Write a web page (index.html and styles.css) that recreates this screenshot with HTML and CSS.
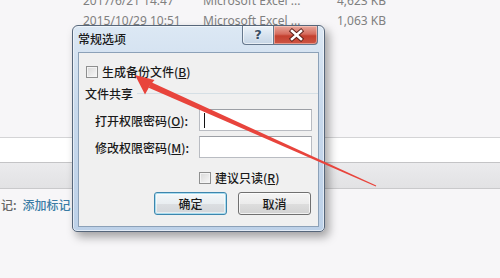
FILE: index.html
```html
<!DOCTYPE html>
<html>
<head>
	<meta charset="utf-8">
	<title>常规选项</title>
	<link rel="stylesheet" href="styles.css">
</head>
<body>
	<div class="desk">
		<ul class="files">
			<li><span class="date">2017/6/21 14:47</span><span class="kind">Microsoft Excel ...</span><span class="size">4,623 KB</span></li>
			<li><span class="date">2015/10/29 10:51</span><span class="kind">Microsoft Excel ...</span><span class="size">1,063 KB</span></li>
		</ul>
		<div class="band">
			<div class="band-top"></div>
			<div class="band-bar"></div>
		</div>
		<p class="tags">记:<a>添加标记</a></p>
	</div>

	<section class="dialog">
		<header class="titlebar">
			<span class="title">常规选项</span>
			<div class="caption">
				<span class="help">?</span>
				<span class="close">
					<svg width="45" height="18" viewBox="0 0 45 18">
						<path d="M18 5 L27 13 M27 5 L18 13" stroke="#5a1d16" stroke-width="4.4" stroke-linecap="square" fill="none"/>
						<path d="M18 5 L27 13 M27 5 L18 13" stroke="#fff" stroke-width="2.6" stroke-linecap="square" fill="none"/>
					</svg>
				</span>
			</div>
		</header>
		<div class="client">
			<label class="check"><input type="checkbox">生成备份文件(<u>B</u>)</label>
			<div class="group">文件共享</div>
			<div class="field">
				<span class="label">打开权限密码(<u>O</u>):</span>
				<div class="textbox"><span class="caret"></span></div>
			</div>
			<div class="field second">
				<span class="label">修改权限密码(<u>M</u>):</span>
				<div class="textbox"></div>
			</div>
			<label class="check readonly"><input type="checkbox">建议只读(<u>R</u>)</label>
			<div class="buttons">
				<button class="btn default">确定</button>
				<button class="btn">取消</button>
			</div>
		</div>
	</section>

	<svg class="arrow" width="500" height="278" viewBox="0 0 500 278">
		<polygon points="151.3,82.3 148.7,87.7 375.8,186.5 376.2,185.5" fill="#e8443c"/>
		<polygon points="135,75 154.5,80 150,85.5 145,94.5" fill="#e8443c"/>
	</svg>
</body>
</html>
```

FILE: styles.css
```css
*{
	padding: 0;
	margin: 0;
}
body{
	width: 500px;
	height: 278px;
	overflow: hidden;
	background: #f7f6f8;
	font-family: "Noto Sans", "Noto Sans CJK SC", sans-serif;
}
.files{
	list-style: none;
	margin-top: -9px;
	font-size: 12px;
	color: #808080;
}
.files li{
	display: flex;
	height: 20px;
	line-height: 20px;
	padding-left: 83px;
	white-space: nowrap;
}
.files .date{
	width: 120px;
}
.files .kind{
	width: 134px;
}
.band{
	margin-top: 106px;
}
.band-top{
	height: 24px;
	background: #fff;
	border-top: 1px solid #d4d4d6;
	border-bottom: 1px solid #c4c4c6;
}
.band-bar{
	height: 25px;
	background: linear-gradient(#ebebed, #e2e2e4);
	border-bottom: 1px solid #c9c9cb;
}
.tags{
	margin-top: 8px;
	font: 500 12px/16px "Noto Sans CJK SC", sans-serif;
	color: #666;
	padding-left: 1px;
}
.tags a{
	margin-left: 6px;
	color: #3a7ca6;
}

/* dialog window */
.dialog{
	position: absolute;
	left: 72px;
	top: 25px;
	width: 253px;
	height: 207px;
	box-sizing: border-box;
	display: flex;
	flex-direction: column;
	padding: 0 5px 4px 5px;
	border: 1px solid #56667a;
	border-radius: 6px 6px 5px 5px;
	background: linear-gradient(#dce8f4, #c8d9ec 40%, #bdd1e8);
	box-shadow: 4px 5px 10px rgba(0, 0, 0, .35), inset 0 0 0 1px rgba(255, 255, 255, .55);
	font: 500 12px "Noto Sans CJK SC", sans-serif;
	color: #1a1a1a;
}
.titlebar{
	height: 26px;
	display: flex;
	align-items: flex-start;
}
.title{
	line-height: 26px;
}
.caption{
	display: flex;
	margin-left: auto;
	margin-right: 1px;
}
.caption span{
	height: 19px;
	box-sizing: border-box;
	border: 1px solid #66788d;
	border-top: none;
}
.caption .help{
	width: 31px;
	border-radius: 0 0 0 4px;
	border-right: none;
	background: linear-gradient(#edf3f9, #d7e3ef 50%, #c6d5e5);
	box-shadow: inset 0 0 0 1px rgba(255, 255, 255, .6);
	text-align: center;
	font: bold 13px/18px "DejaVu Sans", sans-serif;
	color: #3a4f66;
	text-shadow: 0 0 2px #fff;
}
.caption .close{
	width: 45px;
	border-radius: 0 0 4px 0;
	background: linear-gradient(#e7a79b, #d66c5e 45%, #c4402f 55%, #cc5443);
	box-shadow: inset 0 0 0 1px rgba(255, 220, 210, .5);
}
.caption .close svg{
	display: block;
}
.client{
	flex: 1;
	display: flex;
	flex-direction: column;
	padding: 12px 6px 0 7px;
	border: 1px solid #8ca1b8;
	background: #f0f0f0;
}
.check{
	display: flex;
	align-items: center;
	height: 14px;
	line-height: 14px;
}
.check input{
	-webkit-appearance: none;
	appearance: none;
	width: 12px;
	height: 12px;
	margin: 0 4px 0 0;
	border: 1px solid #8e8f8f;
	background: linear-gradient(135deg, #d8d8d8, #f8f8f8);
	box-shadow: inset 0 0 0 1px #f4f4f4;
}
.group{
	display: flex;
	align-items: center;
	height: 16px;
	margin: 6px -6px 0 -1px;
}
.group::after{
	content: "";
	flex: 1;
	height: 1px;
	margin-left: 4px;
	background: #d5dfe5;
}
.field{
	display: flex;
	align-items: center;
	height: 22px;
	margin-top: 8px;
}
.field.second{
	margin-top: 5px;
}
.field .label{
	flex: 1;
	padding-left: 9px;
}
.textbox{
	display: flex;
	align-items: center;
	width: 113px;
	height: 22px;
	box-sizing: border-box;
	padding-left: 4px;
	background: #fff;
	border: 1px solid #b9bcc2;
	border-top-color: #9c9fa5;
}
.caret{
	width: 1px;
	height: 15px;
	background: #111;
}
.readonly{
	width: 113px;
	margin: 13px 0 0 auto;
}
.buttons{
	display: flex;
	justify-content: flex-end;
	gap: 11px;
	margin: 7px 1px 0 0;
}
.btn{
	width: 73px;
	height: 23px;
	border: 1px solid #707070;
	border-radius: 3px;
	background: linear-gradient(#f4f4f4, #ececec 50%, #dedede 50%, #d2d2d2);
	box-shadow: inset 0 0 0 1px rgba(255, 255, 255, .7);
	font: 500 12px "Noto Sans CJK SC", sans-serif;
	color: #1a1a1a;
}
.btn.default{
	border-color: #3d86ad;
	background: linear-gradient(#f3f7f9, #e9eef1 50%, #dcdfe2 50%, #d3d6da);
	box-shadow: inset 0 0 0 1px #a9dcef, inset 0 0 0 2px rgba(255, 255, 255, .5);
}
.arrow{
	position: absolute;
	left: 0;
	top: 0;
	pointer-events: none;
}
```
